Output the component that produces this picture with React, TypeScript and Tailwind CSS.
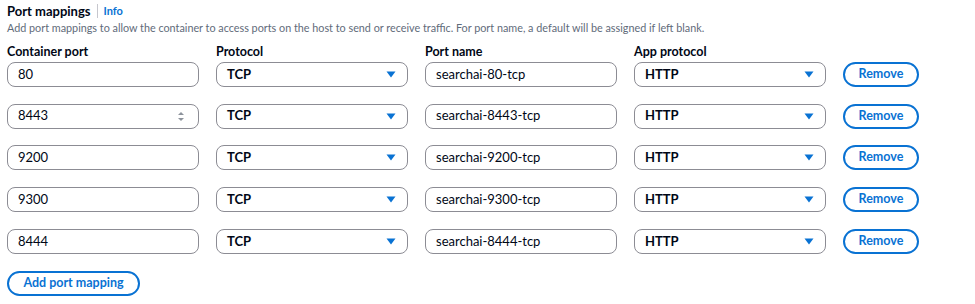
import React from "react";

const rows = [
  { port: "80", name: "searchai-80-tcp", spinner: false },
  { port: "8443", name: "searchai-8443-tcp", spinner: true },
  { port: "9200", name: "searchai-9200-tcp", spinner: false },
  { port: "9300", name: "searchai-9300-tcp", spinner: false },
  { port: "8444", name: "searchai-8444-tcp", spinner: false },
];

function Caret() {
  return (
    <svg width="10" height="7" viewBox="0 0 10 7" className="shrink-0">
      <path d="M0.5 0.5 L9.5 0.5 L5 6.5 Z" fill="#0972d3" />
    </svg>
  );
}

function Spinner() {
  return (
    <svg width="8" height="11" viewBox="0 0 8 11" className="shrink-0">
      <path d="M1 4 L4 1 L7 4 Z" fill="#8d939c" />
      <path d="M1 7 L4 10 L7 7 Z" fill="#8d939c" />
    </svg>
  );
}

const box =
  "h-[25px] w-[192px] rounded-[8px] border-[1.5px] border-[#8c8c94] bg-white flex items-center text-[13px] text-[#000716]";

const label = "text-[12.5px] font-bold text-[#000716] leading-[18px] -mb-[16px]";

function Btn({ children, w }: { children: React.ReactNode; w: string }) {
  return (
    <div
      className={`h-[25px] ${w} rounded-full border-2 border-[#0972d3] flex items-center justify-center text-[12.5px] font-bold text-[#0972d3]`}
    >
      {children}
    </div>
  );
}

export default function App() {
  return (
    <div
      className="w-[975px] h-[304px] bg-white pl-[7px] pt-[2px]"
      style={{ fontFamily: 'Lato, "Open Sans", sans-serif' }}
    >
      <div className="flex items-center h-[18px]">
        <span className="text-[13px] font-bold text-[#000716] leading-[18px]">Port mappings</span>
        <span className="mx-[6px] h-[14px] w-px bg-[#c6c6cd]" />
        <span className="text-[11px] font-bold text-[#0972d3] leading-[18px]">Info</span>
      </div>
      <div className="text-[10.8px] leading-[14px] text-[#5f6b7a] mt-px">
        Add port mappings to allow the container to access ports on the host to send or receive traffic. For port name, a default will be assigned if left blank.
      </div>
      <div className="mt-[8px] grid grid-cols-[192px_192px_192px_192px_76px] gap-x-[17px] gap-y-[16.75px]">
        <div className={label}>Container port</div>
        <div className={label}>Protocol</div>
        <div className={label}>Port name</div>
        <div className={label}>App protocol</div>
        <div className="-mb-[16px]" />
        {rows.map((r) => (
          <React.Fragment key={r.port}>
            <div className={`${box} pl-[10px] pr-[13px] justify-between`}>
              <span>{r.port}</span>
              {r.spinner && <Spinner />}
            </div>
            <div className={`${box} pl-[10px] pr-[11px] justify-between font-bold`}>
              <span>TCP</span>
              <Caret />
            </div>
            <div className={`${box} pl-[10px]`}>
              <span>{r.name}</span>
            </div>
            <div className={`${box} pl-[10px] pr-[11px] justify-between font-bold`}>
              <span>HTTP</span>
              <Caret />
            </div>
            <Btn w="w-[76px]">Remove</Btn>
          </React.Fragment>
        ))}
      </div>
      <div className="mt-[17px]">
        <Btn w="w-[133px]">Add port mapping</Btn>
      </div>
    </div>
  );
}
